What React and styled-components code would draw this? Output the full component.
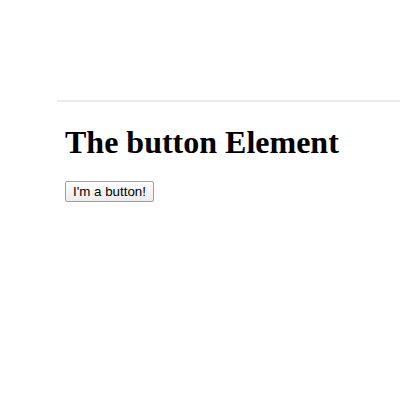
import React from "react";
import styled, { createGlobalStyle } from "styled-components";

const GlobalStyle = createGlobalStyle`
  html, body {
    margin: 0;
    background: #fff;
  }
`;

const Main = styled.div`
  margin: 100px 0 0 57px;
  border-top: 2px solid #ebebeb;
  padding: 0 0 0 8px;
  font-family: "Liberation Serif", serif;
  color: #000;
`;

const Title = styled.h1`
  font-size: 32px;
  font-weight: bold;
  margin: 22px 0 20px;
  line-height: 37px;
`;

const Button = styled.button`
  font-family: "Liberation Sans", Arial, sans-serif;
  font-size: 13.33px;
  color: #000;
  height: 21px;
  padding: 1px 7px;
  border: 1px solid #a0a0a0;
  border-radius: 2px;
  background: linear-gradient(#fdfdfd, #ececec);
  cursor: pointer;
`;

export default function App() {
  return (
    <>
      <GlobalStyle />
      <Main>
        <Title>The button Element</Title>
        <Button>I'm a button!</Button>
      </Main>
    </>
  );
}
